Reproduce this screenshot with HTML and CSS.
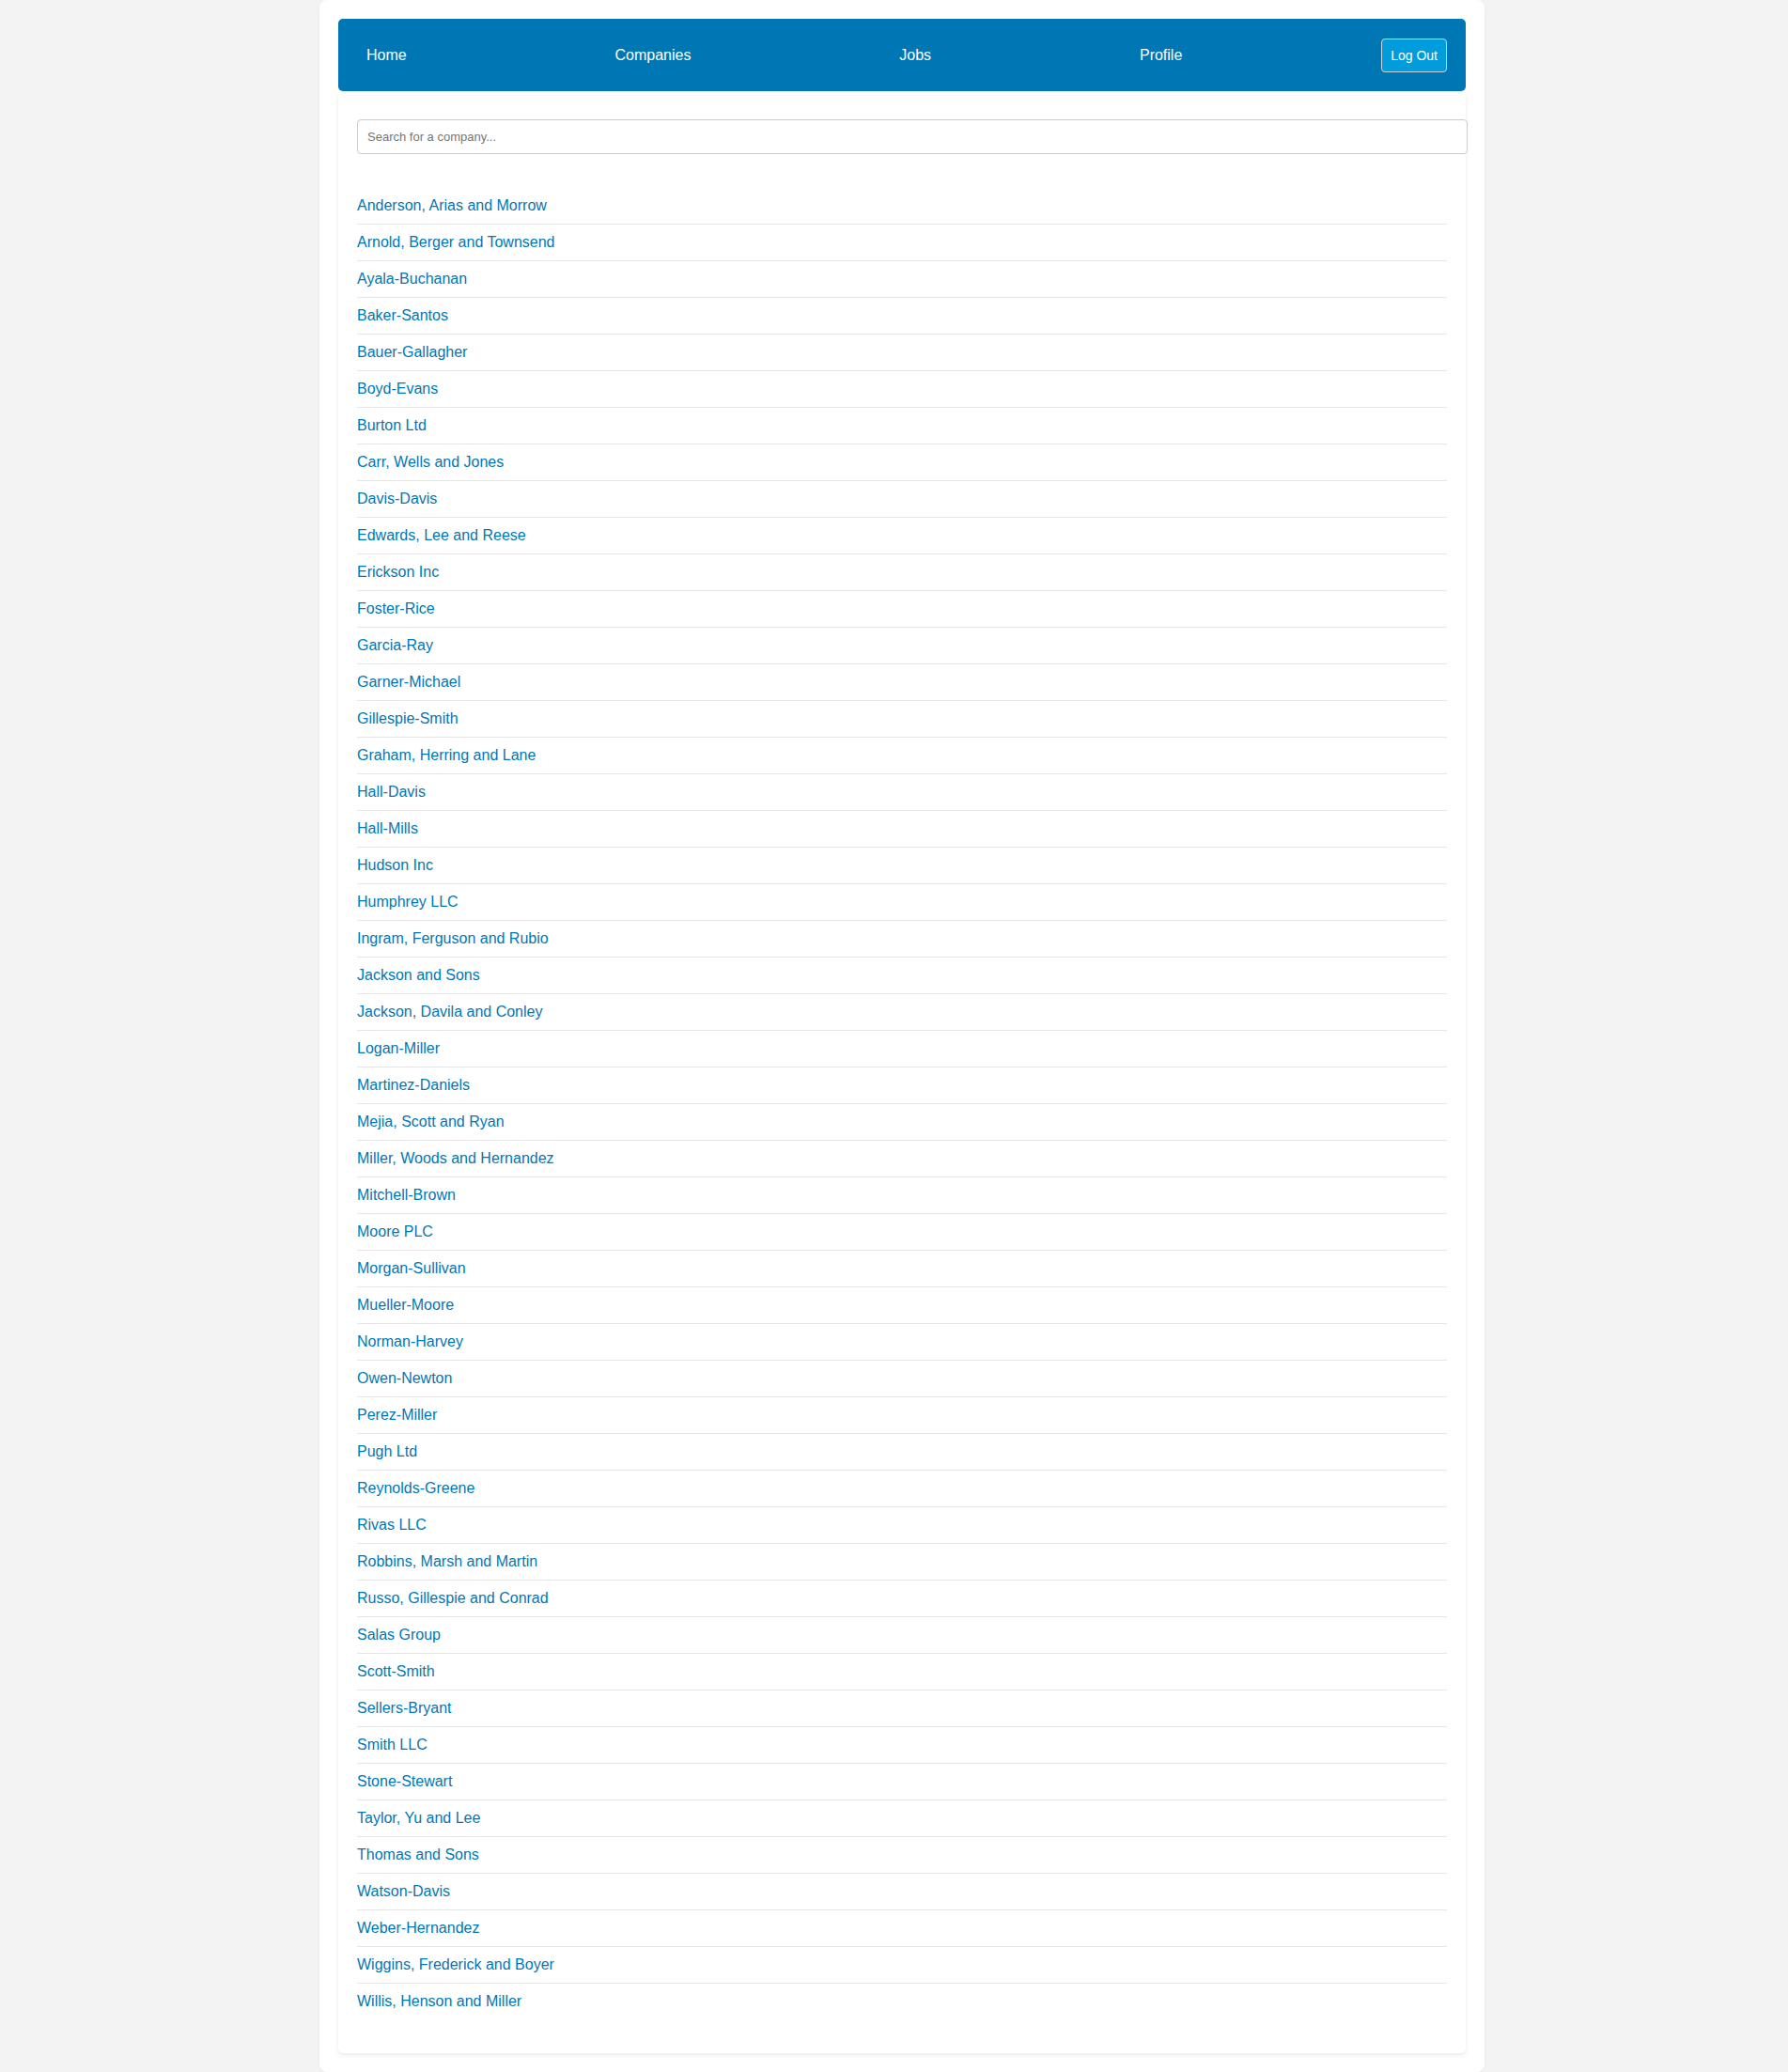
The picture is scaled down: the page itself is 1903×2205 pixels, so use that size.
FILE: index.html
```html
<!DOCTYPE html>
<html lang="en">
<head>
<meta charset="utf-8">
<title>Companies</title>
<link rel="stylesheet" href="styles.css">
</head>
<body>
<div class="page">
  <nav class="navbar">
    <a class="nav-link" href="#">Home</a>
    <a class="nav-link" href="#">Companies</a>
    <a class="nav-link" href="#">Jobs</a>
    <a class="nav-link" href="#">Profile</a>
    <button class="logout" type="button">Log Out</button>
  </nav>
  <main class="card">
    <input class="search" type="text" placeholder="Search for a company...">
    <ul class="company-list">
      <li><a href="#">Anderson, Arias and Morrow</a></li>
      <li><a href="#">Arnold, Berger and Townsend</a></li>
      <li><a href="#">Ayala-Buchanan</a></li>
      <li><a href="#">Baker-Santos</a></li>
      <li><a href="#">Bauer-Gallagher</a></li>
      <li><a href="#">Boyd-Evans</a></li>
      <li><a href="#">Burton Ltd</a></li>
      <li><a href="#">Carr, Wells and Jones</a></li>
      <li><a href="#">Davis-Davis</a></li>
      <li><a href="#">Edwards, Lee and Reese</a></li>
      <li><a href="#">Erickson Inc</a></li>
      <li><a href="#">Foster-Rice</a></li>
      <li><a href="#">Garcia-Ray</a></li>
      <li><a href="#">Garner-Michael</a></li>
      <li><a href="#">Gillespie-Smith</a></li>
      <li><a href="#">Graham, Herring and Lane</a></li>
      <li><a href="#">Hall-Davis</a></li>
      <li><a href="#">Hall-Mills</a></li>
      <li><a href="#">Hudson Inc</a></li>
      <li><a href="#">Humphrey LLC</a></li>
      <li><a href="#">Ingram, Ferguson and Rubio</a></li>
      <li><a href="#">Jackson and Sons</a></li>
      <li><a href="#">Jackson, Davila and Conley</a></li>
      <li><a href="#">Logan-Miller</a></li>
      <li><a href="#">Martinez-Daniels</a></li>
      <li><a href="#">Mejia, Scott and Ryan</a></li>
      <li><a href="#">Miller, Woods and Hernandez</a></li>
      <li><a href="#">Mitchell-Brown</a></li>
      <li><a href="#">Moore PLC</a></li>
      <li><a href="#">Morgan-Sullivan</a></li>
      <li><a href="#">Mueller-Moore</a></li>
      <li><a href="#">Norman-Harvey</a></li>
      <li><a href="#">Owen-Newton</a></li>
      <li><a href="#">Perez-Miller</a></li>
      <li><a href="#">Pugh Ltd</a></li>
      <li><a href="#">Reynolds-Greene</a></li>
      <li><a href="#">Rivas LLC</a></li>
      <li><a href="#">Robbins, Marsh and Martin</a></li>
      <li><a href="#">Russo, Gillespie and Conrad</a></li>
      <li><a href="#">Salas Group</a></li>
      <li><a href="#">Scott-Smith</a></li>
      <li><a href="#">Sellers-Bryant</a></li>
      <li><a href="#">Smith LLC</a></li>
      <li><a href="#">Stone-Stewart</a></li>
      <li><a href="#">Taylor, Yu and Lee</a></li>
      <li><a href="#">Thomas and Sons</a></li>
      <li><a href="#">Watson-Davis</a></li>
      <li><a href="#">Weber-Hernandez</a></li>
      <li><a href="#">Wiggins, Frederick and Boyer</a></li>
      <li><a href="#">Willis, Henson and Miller</a></li>
    </ul>
  </main>
</div>
</body>
</html>
```
FILE: styles.css
```css
html, body {
  margin: 0;
  padding: 0;
}

body {
  background: #f3f3f3;
  font-family: "Liberation Sans", Arial, sans-serif;
  color: #333;
}

.page {
  width: 1200px;
  margin: 0 0 0 340px;
  padding: 20px;
  background: #ffffff;
  border-radius: 8px;
  box-shadow: 0 1px 3px rgba(0, 0, 0, 0.06);
}

.navbar {
  display: flex;
  justify-content: space-between;
  align-items: center;
  height: 77px;
  padding: 0 20px;
  background: #0077b5;
  border-radius: 5px;
}

.nav-link {
  padding: 0 10px;
  color: #ffffff;
  font-size: 16px;
  line-height: 18px;
  text-decoration: none;
}

.logout {
  padding: 9px 9px;
  border: 1px solid #c9d3da;
  border-radius: 4px;
  background: #009cdb;
  color: #ffffff;
  font-family: "Liberation Sans", Arial, sans-serif;
  font-size: 14px;
  line-height: 16px;
  cursor: pointer;
}

.card {
  display: block;
  padding: 30px 20px 36px;
  background: #ffffff;
  border-radius: 5px;
  box-shadow: 0 2px 5px rgba(0, 0, 0, 0.09);
}

.search {
  display: block;
  width: 100%;
  margin: 0;
  padding: 10px 10px;
  border: 1px solid #cccccc;
  border-radius: 4px;
  font-family: "Liberation Sans", Arial, sans-serif;
  font-size: 13px;
  line-height: 15px;
  color: #333;
  background: #fff;
}

.search::placeholder {
  color: #757575;
}

.company-list {
  list-style: none;
  margin: 36px 0 0;
  padding: 0;
}

.company-list li {
  padding: 10px 0;
  border-bottom: 1px solid #e6e6e6;
}

.company-list li:last-child {
  border-bottom: none;
}

.company-list a {
  display: block;
  color: #0077b5;
  font-size: 16px;
  line-height: 18px;
  text-decoration: none;
}
```
